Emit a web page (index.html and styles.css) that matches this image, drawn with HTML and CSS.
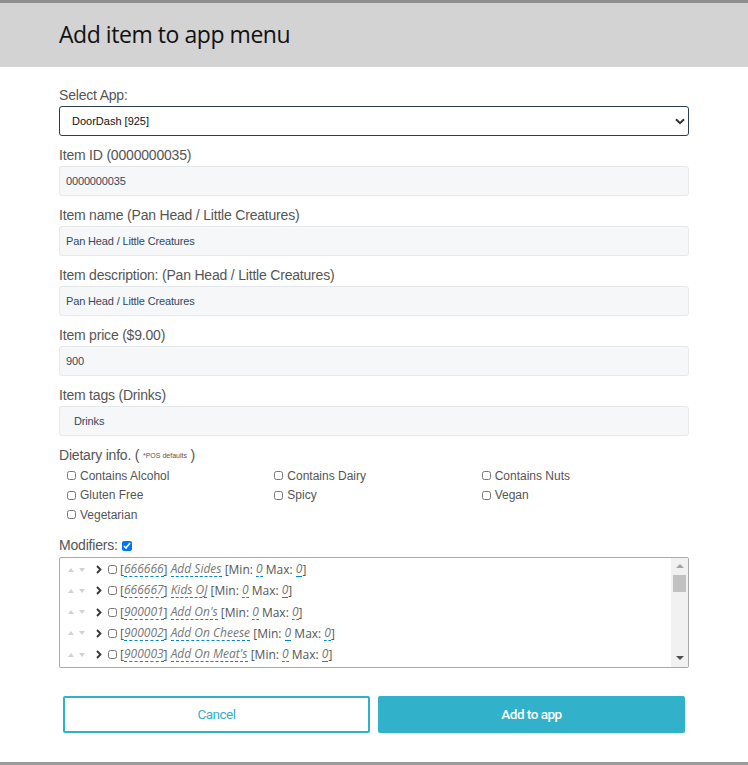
FILE: index.html
```
<!DOCTYPE html>
<html lang="en">
<head>
<meta charset="utf-8">
<title>Add item to app menu</title>
<link rel="stylesheet" href="styles.css">
</head>
<body>
<div class="modal">
  <div class="modal-header">
    <h1 class="modal-title">Add item to app menu</h1>
  </div>
  <div class="modal-body">
    <div class="group">
      <label class="lbl">Select App:</label>
      <div class="select">
        <span>DoorDash [925]</span>
        <svg class="caret" width="10" height="7" viewBox="0 0 10 7"><path d="M1 1.2 L5 5.2 L9 1.2" fill="none" stroke="#333" stroke-width="2"/></svg>
      </div>
    </div>
    <div class="group">
      <label class="lbl">Item ID (0000000035)</label>
      <div class="input">0000000035</div>
    </div>
    <div class="group">
      <label class="lbl">Item name (Pan Head / Little Creatures)</label>
      <div class="input">Pan Head / Little Creatures</div>
    </div>
    <div class="group">
      <label class="lbl">Item description: (Pan Head / Little Creatures)</label>
      <div class="input">Pan Head / Little Creatures</div>
    </div>
    <div class="group">
      <label class="lbl">Item price ($9.00)</label>
      <div class="input">900</div>
    </div>
    <div class="group">
      <label class="lbl">Item tags (Drinks)</label>
      <div class="input input-tags">Drinks</div>
    </div>

    <label class="lbl">Dietary info. ( <span class="tiny">*POS defaults</span> )</label>
    <div class="diet">
      <label class="chk"><input type="checkbox">Contains Alcohol</label>
      <label class="chk"><input type="checkbox">Contains Dairy</label>
      <label class="chk"><input type="checkbox">Contains Nuts</label>
      <label class="chk"><input type="checkbox">Gluten Free</label>
      <label class="chk"><input type="checkbox">Spicy</label>
      <label class="chk"><input type="checkbox">Vegan</label>
      <label class="chk"><input type="checkbox">Vegetarian</label>
    </div>

    <label class="lbl lbl-mod">Modifiers: <input type="checkbox" class="mod-toggle" checked></label>
    <div class="mods">
      <div class="mod-list">
        <div class="mod"><span class="sort"><i class="up"></i><i class="down"></i></span><svg class="chev" width="6" height="9" viewBox="0 0 6 9"><path d="M1 1 L4.5 4.5 L1 8" fill="none" stroke="#333" stroke-width="1.8"/></svg><input type="checkbox">[<span class="ed">666666</span>] <span class="ed">Add Sides</span> [Min: <span class="ed">0</span> Max: <span class="ed">0</span>]</div>
        <div class="mod"><span class="sort"><i class="up"></i><i class="down"></i></span><svg class="chev" width="6" height="9" viewBox="0 0 6 9"><path d="M1 1 L4.5 4.5 L1 8" fill="none" stroke="#333" stroke-width="1.8"/></svg><input type="checkbox">[<span class="ed">666667</span>] <span class="ed">Kids OJ</span> [Min: <span class="ed">0</span> Max: <span class="ed">0</span>]</div>
        <div class="mod"><span class="sort"><i class="up"></i><i class="down"></i></span><svg class="chev" width="6" height="9" viewBox="0 0 6 9"><path d="M1 1 L4.5 4.5 L1 8" fill="none" stroke="#333" stroke-width="1.8"/></svg><input type="checkbox">[<span class="ed">900001</span>] <span class="ed">Add On's</span> [Min: <span class="ed">0</span> Max: <span class="ed">0</span>]</div>
        <div class="mod"><span class="sort"><i class="up"></i><i class="down"></i></span><svg class="chev" width="6" height="9" viewBox="0 0 6 9"><path d="M1 1 L4.5 4.5 L1 8" fill="none" stroke="#333" stroke-width="1.8"/></svg><input type="checkbox">[<span class="ed">900002</span>] <span class="ed">Add On Cheese</span> [Min: <span class="ed">0</span> Max: <span class="ed">0</span>]</div>
        <div class="mod"><span class="sort"><i class="up"></i><i class="down"></i></span><svg class="chev" width="6" height="9" viewBox="0 0 6 9"><path d="M1 1 L4.5 4.5 L1 8" fill="none" stroke="#333" stroke-width="1.8"/></svg><input type="checkbox">[<span class="ed">900003</span>] <span class="ed">Add On Meat's</span> [Min: <span class="ed">0</span> Max: <span class="ed">0</span>]</div>
      </div>
      <div class="sbar">
        <div class="sb-btn"><span class="tri-up"></span></div>
        <div class="thumb"></div>
        <div class="sb-fill"></div>
        <div class="sb-btn"><span class="tri-down"></span></div>
      </div>
    </div>

    <div class="actions">
      <button class="btn btn-outline">Cancel</button>
      <button class="btn btn-primary">Add to app</button>
    </div>
  </div>
</div>
</body>
</html>
```
FILE: styles.css
```
* { box-sizing: border-box; }
html, body { margin: 0; padding: 0; background: #fff; }
body {
  font-family: "Liberation Sans", Arial, sans-serif;
  width: 748px;
  height: 765px;
  overflow: hidden;
}
.modal {
  height: 765px;
  border-top: 3px solid #8e8e8e;
  border-bottom: 3px solid #9b9b9b;
  display: flex;
  flex-direction: column;
}
.modal-header {
  background: #d3d3d3;
  height: 64px;
  flex: none;
  display: flex;
  align-items: center;
  padding-left: 59px;
}
.modal-title {
  margin: 0;
  font-family: "Open Sans", "Noto Sans", sans-serif;
  font-weight: 500;
  font-size: 23px;
  letter-spacing: -0.45px;
  color: #111;
  line-height: 1;
  padding-bottom: 2px;
}
.modal-body {
  padding: 19px 59px 0;
}
.group { margin-bottom: 10px; }
.lbl {
  display: block;
  font-size: 14px;
  letter-spacing: -0.2px;
  line-height: 18px;
  color: #555;
  margin-bottom: 2px;
}
.select {
  height: 30px;
  border: 1px solid #2c3e50;
  border-radius: 3px;
  display: flex;
  align-items: center;
  justify-content: space-between;
  padding: 0 3px 0 12px;
  font-size: 11px;
  color: #111;
}
.input {
  height: 30px;
  background: #f5f7f9;
  border: 1px solid #e6e9ec;
  border-radius: 3px;
  display: flex;
  align-items: center;
  padding-left: 6px;
  font-size: 11px;
  letter-spacing: -0.15px;
  color: #34495e;
}
.input-tags { padding-left: 14px; }
.tiny { font-size: 7px; letter-spacing: 0; vertical-align: 2px; }
.diet {
  display: grid;
  grid-template-columns: repeat(3, 1fr);
  grid-auto-rows: 19.5px;
  padding-left: 8px;
  margin-top: -1px;
  margin-bottom: 11px;
}
.chk {
  display: flex;
  align-items: center;
  font-size: 12px;
  color: #555;
}
.chk input {
  width: 9px;
  height: 9px;
  margin: 0 4px 0 0;
}
.lbl-mod { margin-bottom: 3px; }
.mod-toggle {
  width: 10px;
  height: 10px;
  margin: 0 0 0 1px;
  vertical-align: -1px;
}
.mods {
  height: 111px;
  border: 1px solid #aaa;
  border-radius: 2px;
  display: flex;
}
.mod-list {
  flex: 1;
  overflow: hidden;
  padding: 1.5px 0 0 7px;
}
.mod {
  height: 21.25px;
  display: flex;
  align-items: center;
  font-family: "Open Sans", "Noto Sans", sans-serif;
  font-size: 12px;
  letter-spacing: 0;
  color: #555;
  white-space: pre;
}
.sort {
  display: flex;
  align-items: center;
  gap: 5px;
  width: 29px;
  padding-left: 1px;
}
.sort .up {
  width: 0; height: 0;
  border-left: 3.5px solid transparent;
  border-right: 3.5px solid transparent;
  border-bottom: 4px solid #d2d2d2;
}
.sort .down {
  width: 0; height: 0;
  border-left: 3.5px solid transparent;
  border-right: 3.5px solid transparent;
  border-top: 4px solid #d2d2d2;
}
.chev { margin-right: 6px; }
.mod input {
  width: 9px;
  height: 9px;
  margin: 0 3px 0 0;
}
.ed {
  font-style: italic;
  color: #777;
  border-bottom: 1px dashed #0088cc;
  line-height: 14px;
}
.sbar {
  width: 17px;
  background: #f1f1f1;
  display: flex;
  flex-direction: column;
  align-items: center;
}
.sb-btn {
  height: 17px;
  width: 17px;
  display: flex;
  align-items: center;
  justify-content: center;
}
.tri-up {
  width: 0; height: 0;
  border-left: 4px solid transparent;
  border-right: 4px solid transparent;
  border-bottom: 4px solid #a3a3a3;
}
.tri-down {
  width: 0; height: 0;
  border-left: 4px solid transparent;
  border-right: 4px solid transparent;
  border-top: 4px solid #505050;
}
.thumb {
  width: 13px;
  height: 17px;
  background: #c1c1c1;
}
.sb-fill { flex: 1; }
.actions {
  display: grid;
  grid-template-columns: 1fr 1fr;
  gap: 8px;
  margin: 28px 4px 0;
}
.btn {
  height: 37px;
  border-radius: 2px;
  font-family: Roboto, "Liberation Sans", sans-serif;
  font-size: 13.5px;
  letter-spacing: -0.5px;
  cursor: pointer;
}
.btn-outline {
  background: #fff;
  border: 2px solid #31b0c9;
  color: #31b0c9;
}
.btn-primary {
  background: #31b2ca;
  border: none;
  color: #fff;
  font-weight: 500;
}
```
